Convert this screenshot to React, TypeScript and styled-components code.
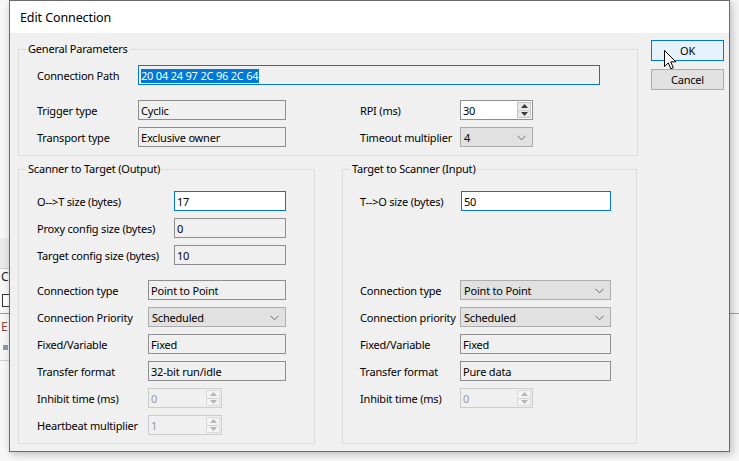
import React from "react";
import styled, { createGlobalStyle } from "styled-components";

const GlobalStyle = createGlobalStyle`
  html, body { margin: 0; padding: 0; }
  body {
    background: #f4f4f4;
    font-family: "Noto Sans", "Open Sans", "Liberation Sans", sans-serif;
    font-size: 11px;
    letter-spacing: -0.2px;
    color: #000;
  }
  * { box-sizing: border-box; }
`;

const Desktop = styled.div`
  position: relative;
  width: 739px;
  height: 461px;
  overflow: hidden;
  background: #f7f7f7;
`;

const BgBand = styled.div<{ $top: number; $h: number; $bg: string; $left?: number; $w?: number }>`
  position: absolute;
  left: ${(p) => p.$left ?? 0}px;
  top: ${(p) => p.$top}px;
  width: ${(p) => p.$w ?? 12}px;
  height: ${(p) => p.$h}px;
  background: ${(p) => p.$bg};
`;

const BgText = styled.span<{ $top: number; $color: string }>`
  position: absolute;
  left: 1px;
  top: ${(p) => p.$top}px;
  font-size: 12px;
  line-height: 14px;
  color: ${(p) => p.$color};
`;

const BgCheck = styled.div`
  position: absolute;
  left: 2px;
  top: 294px;
  width: 12px;
  height: 13px;
  border: 1px solid #333;
  background: #fff;
`;

const Window = styled.div`
  position: absolute;
  left: 9px;
  top: 0;
  width: 721px;
  height: 452px;
  border: 1px solid #6a6a6a;
  background: #f0f0f0;
  box-shadow: 2px 2px 8px rgba(0, 0, 0, 0.25);
  display: flex;
  flex-direction: column;
`;

const TitleBar = styled.div`
  height: 32px;
  background: #ffffff;
  display: flex;
  align-items: center;
  padding-left: 10px;
  font-size: 12.5px;
  letter-spacing: -0.1px;
  flex-shrink: 0;
`;

const Body = styled.div`
  display: flex;
  padding: 7px 0 0 8px;
`;

const Groups = styled.div`
  width: 620px;
  margin-top: 9px;
  display: flex;
  flex-direction: column;
`;

const Group = styled.div<{ $w?: number; $h?: number; $pl: number; $pt: number }>`
  position: relative;
  border: 1px solid #dcdcdc;
  width: ${(p) => (p.$w ? `${p.$w}px` : "auto")};
  height: ${(p) => (p.$h ? `${p.$h}px` : "auto")};
  padding: ${(p) => p.$pt}px 0 8px ${(p) => p.$pl}px;
`;

const GroupTitle = styled.span`
  position: absolute;
  top: -8px;
  left: 7px;
  padding: 0 2px;
  background: #f0f0f0;
  line-height: 14px;
  white-space: nowrap;
`;

const Row = styled.div`
  display: flex;
  align-items: center;
  height: 20px;
`;

const Label = styled.span<{ $w: number }>`
  width: ${(p) => p.$w}px;
  flex-shrink: 0;
  white-space: nowrap;
  line-height: 14px;
  padding-top: 1px;
`;

type BoxVariant = "readonly" | "white" | "focus" | "focusRO" | "disabled";

const boxBg: Record<BoxVariant, string> = {
  readonly: "#f0f0f0",
  white: "#ffffff",
  focus: "#ffffff",
  focusRO: "#f0f0f0",
  disabled: "#f0f0f0",
};
const boxBorder: Record<BoxVariant, string> = {
  readonly: "#8e8e8e",
  white: "#8e8e8e",
  focus: "#0078d7",
  focusRO: "#0078d7",
  disabled: "#cccccc",
};

const Box = styled.div<{ $w: number; $v: BoxVariant }>`
  width: ${(p) => p.$w}px;
  height: 20px;
  flex-shrink: 0;
  border: 1px solid ${(p) => boxBorder[p.$v]};
  background: ${(p) => boxBg[p.$v]};
  color: ${(p) => (p.$v === "disabled" ? "#9a9a9a" : "#000")};
  display: flex;
  align-items: center;
  padding: 1px 2px 0;
  white-space: nowrap;
  overflow: hidden;
  line-height: 14px;
`;

const Selected = styled.span`
  background: #0078d7;
  color: #fff;
  padding: 0 1px 0 0;
`;

const Combo = styled.div<{ $w: number }>`
  width: ${(p) => p.$w}px;
  height: 20px;
  flex-shrink: 0;
  border: 1px solid #adadad;
  background: #e1e1e1;
  display: flex;
  align-items: center;
  justify-content: space-between;
  padding: 1px 6px 0 3px;
  white-space: nowrap;
  line-height: 14px;
`;

const Spin = styled(Box)`
  padding-right: 1px;
  padding-top: 0;
  justify-content: space-between;
`;

const SpinValue = styled.span`
  padding-top: 1px;
`;

const SpinButtons = styled.div<{ $disabled?: boolean }>`
  width: 14px;
  height: 16px;
  display: flex;
  flex-direction: column;
  border: 1px solid ${(p) => (p.$disabled ? "#dadada" : "#c4c4c4")};
  background: ${(p) => (p.$disabled ? "#f4f4f4" : "#eaeaea")};
`;

const SpinHalf = styled.div<{ $top?: boolean }>`
  flex: 1;
  display: flex;
  align-items: center;
  justify-content: center;
  border-top: ${(p) => (p.$top ? "none" : "1px solid #d0d0d0")};
`;

const GridTwo = styled.div`
  margin-top: 15px;
  display: grid;
  grid-template-columns: 249px 173px;
  column-gap: 74px;
  row-gap: 7px;
`;

const LowerRow = styled.div`
  display: flex;
  gap: 27px;
  margin-top: 13px;
`;

const Section = styled.div<{ $h?: number; $mt?: number }>`
  display: flex;
  flex-direction: column;
  gap: 7px;
  height: ${(p) => (p.$h ? `${p.$h}px` : "auto")};
  margin-top: ${(p) => p.$mt ?? 0}px;
`;

const Buttons = styled.div`
  margin-left: 13px;
  display: flex;
  flex-direction: column;
  gap: 8px;
`;

const Button = styled.div<{ $primary?: boolean }>`
  width: 73px;
  height: 21px;
  border: 1px solid ${(p) => (p.$primary ? "#0078d7" : "#adadad")};
  background: ${(p) => (p.$primary ? "#e5f1fb" : "#e1e1e1")};
  display: flex;
  align-items: center;
  justify-content: center;
  line-height: 14px;
  padding-top: 1px;
`;

const Cursor = styled.svg`
  position: absolute;
  left: 664px;
  top: 50px;
`;

const Chevron = () => (
  <svg width="9" height="6" viewBox="0 0 9 6">
    <path d="M0.5 0.8 L4.5 4.8 L8.5 0.8" fill="none" stroke="#6a6a6a" strokeWidth="1" />
  </svg>
);

const Tri = ({ up, color }: { up?: boolean; color: string }) => (
  <svg width="7" height="4" viewBox="0 0 7 4">
    <path d={up ? "M0 4 L3.5 0 L7 4 Z" : "M0 0 L3.5 4 L7 0 Z"} fill={color} />
  </svg>
);

const SpinBox = ({ value, w, disabled }: { value: string; w: number; disabled?: boolean }) => {
  const c = disabled ? "#b5b5b5" : "#3a3a3a";
  return (
    <Spin $w={w} $v={disabled ? "disabled" : "white"}>
      <SpinValue>{value}</SpinValue>
      <SpinButtons $disabled={disabled}>
        <SpinHalf $top>
          <Tri up color={c} />
        </SpinHalf>
        <SpinHalf>
          <Tri color={c} />
        </SpinHalf>
      </SpinButtons>
    </Spin>
  );
};

const ComboBox = ({ value, w }: { value: string; w: number }) => (
  <Combo $w={w}>
    <span>{value}</span>
    <Chevron />
  </Combo>
);

export default function App() {
  return (
    <>
      <GlobalStyle />
      <Desktop>
        <BgBand $top={238} $h={30} $bg="#e9e9e9" />
        <BgBand $top={268} $h={1} $bg="#d0d0d0" />
        <BgText $top={270} $color="#222">C</BgText>
        <BgCheck />
        <BgBand $top={313} $h={1} $bg="#9a9a9a" />
        <BgText $top={320} $color="#8a4a40">E</BgText>
        <BgBand $top={345} $h={5} $w={5} $left={3} $bg="#8a9ab0" />
        <BgBand $top={360} $h={1} $bg="#d0d0d0" />
        <BgBand $top={313} $h={1} $left={730} $w={9} $bg="#a0a0a0" />

        <Window>
          <TitleBar>Edit Connection</TitleBar>
          <Body>
            <Groups>
              <Group $pl={18} $pt={15}>
                <GroupTitle>General Parameters</GroupTitle>
                <Row>
                  <Label $w={101}>Connection Path</Label>
                  <Box $w={462} $v="focusRO">
                    <Selected>20 04 24 97 2C 96 2C 64</Selected>
                  </Box>
                </Row>
                <GridTwo>
                  <Row>
                    <Label $w={101}>Trigger type</Label>
                    <Box $w={148} $v="readonly">Cyclic</Box>
                  </Row>
                  <Row>
                    <Label $w={100}>RPI (ms)</Label>
                    <SpinBox value="30" w={73} />
                  </Row>
                  <Row>
                    <Label $w={101}>Transport type</Label>
                    <Box $w={148} $v="readonly">Exclusive owner</Box>
                  </Row>
                  <Row>
                    <Label $w={100}>Timeout multiplier</Label>
                    <ComboBox value="4" w={73} />
                  </Row>
                </GridTwo>
              </Group>

              <LowerRow>
                <Group $w={297} $h={275} $pl={18} $pt={21}>
                  <GroupTitle>Scanner to Target (Output)</GroupTitle>
                  <Section $h={74}>
                    <Row>
                      <Label $w={137}>O--&gt;T size (bytes)</Label>
                      <Box $w={112} $v="focus">17</Box>
                    </Row>
                    <Row>
                      <Label $w={137}>Proxy config size (bytes)</Label>
                      <Box $w={112} $v="readonly">0</Box>
                    </Row>
                    <Row>
                      <Label $w={137}>Target config size (bytes)</Label>
                      <Box $w={112} $v="readonly">10</Box>
                    </Row>
                  </Section>
                  <Section $mt={15}>
                    <Row>
                      <Label $w={111}>Connection type</Label>
                      <Box $w={138} $v="readonly">Point to Point</Box>
                    </Row>
                    <Row>
                      <Label $w={111}>Connection Priority</Label>
                      <ComboBox value="Scheduled" w={138} />
                    </Row>
                    <Row>
                      <Label $w={111}>Fixed/Variable</Label>
                      <Box $w={138} $v="readonly">Fixed</Box>
                    </Row>
                    <Row>
                      <Label $w={111}>Transfer format</Label>
                      <Box $w={138} $v="readonly">32-bit run/idle</Box>
                    </Row>
                    <Row>
                      <Label $w={111}>Inhibit time (ms)</Label>
                      <SpinBox value="0" w={74} disabled />
                    </Row>
                    <Row>
                      <Label $w={111}>Heartbeat multiplier</Label>
                      <SpinBox value="1" w={74} disabled />
                    </Row>
                  </Section>
                </Group>

                <Group $w={295} $h={275} $pl={17} $pt={21}>
                  <GroupTitle>Target to Scanner (Input)</GroupTitle>
                  <Section $h={74}>
                    <Row>
                      <Label $w={101}>T--&gt;O size (bytes)</Label>
                      <Box $w={150} $v="focus">50</Box>
                    </Row>
                  </Section>
                  <Section $mt={15}>
                    <Row>
                      <Label $w={100}>Connection type</Label>
                      <ComboBox value="Point to Point" w={151} />
                    </Row>
                    <Row>
                      <Label $w={100}>Connection priority</Label>
                      <ComboBox value="Scheduled" w={151} />
                    </Row>
                    <Row>
                      <Label $w={100}>Fixed/Variable</Label>
                      <Box $w={151} $v="readonly">Fixed</Box>
                    </Row>
                    <Row>
                      <Label $w={100}>Transfer format</Label>
                      <Box $w={151} $v="readonly">Pure data</Box>
                    </Row>
                    <Row>
                      <Label $w={100}>Inhibit time (ms)</Label>
                      <SpinBox value="0" w={73} disabled />
                    </Row>
                  </Section>
                </Group>
              </LowerRow>
            </Groups>

            <Buttons>
              <Button $primary>OK</Button>
              <Button>Cancel</Button>
            </Buttons>
          </Body>
        </Window>

        <Cursor width="13" height="21" viewBox="0 0 13 21">
          <path
            d="M0.5 0.5 L0.5 16.5 L4.3 12.8 L6.8 18.8 L9.3 17.8 L6.8 11.8 L11.8 11.8 Z"
            fill="#fff"
            stroke="#000"
            strokeWidth="1"
            strokeLinejoin="round"
          />
        </Cursor>
      </Desktop>
    </>
  );
}
